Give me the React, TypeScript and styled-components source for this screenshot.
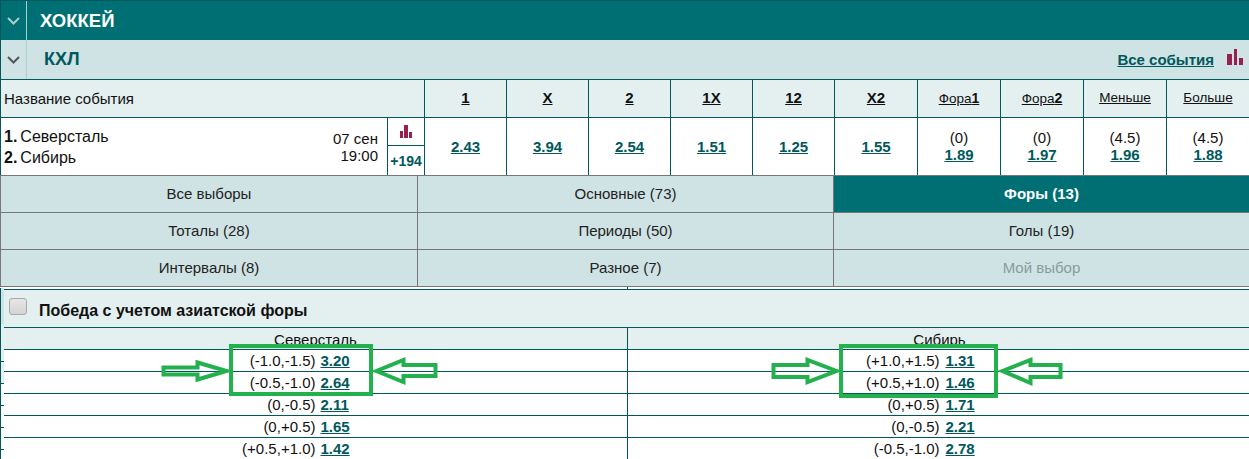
import React from 'react';
import styled, { createGlobalStyle } from 'styled-components';

const teal = '#006f74';
const line = '#00585c';
const pale = '#e4f0f0';
const tab = '#cfe3e4';
const grey = '#777';
const green = '#22b14c';

const GlobalStyle = createGlobalStyle`
  html, body {
    margin: 0;
    padding: 0;
    background: #fff;
    overflow: hidden;
  }
  body {
    font-family: "Liberation Sans", Arial, sans-serif;
    font-size: 15px;
    color: #111;
  }
`;

const Page = styled.div`
  position: relative;
  width: 1249px;
  height: 459px;
  overflow: hidden;
`;

const SportBar = styled.div`
  display: flex;
  height: 39px;
  border-top: 1px solid ${line};
  background: ${teal};
`;

const LeagueBar = styled.div`
  display: flex;
  align-items: center;
  height: 39px;
  background: ${tab};
  border-bottom: 1px solid ${line};
  border-left: 1px solid ${line};
`;

const Toggle = styled.div<{ $dark?: boolean }>`
  width: 25px;
  flex: none;
  align-self: stretch;
  display: flex;
  align-items: center;
  justify-content: center;
  border-left: ${p => (p.$dark ? `1px solid ${line}` : 'none')};
  border-right: 1px solid #a9cfd1;
`;

const SportTitle = styled.div`
  padding-left: 13px;
  line-height: 39px;
  font-size: 18.5px;
  font-weight: bold;
  color: #fff;
`;

const LeagueTitle = styled.div`
  padding-left: 17px;
  flex: 1;
  font-size: 18px;
  font-weight: bold;
  color: ${line};
`;

const AllEvents = styled.a`
  font-size: 15px;
  font-weight: bold;
  color: ${line};
  text-decoration: underline;
  margin-right: 13px;
`;

const Bars = styled.svg`
  display: block;
  margin: -5px 6px 0 0;
`;

const MarketGrid = styled.div`
  display: grid;
  grid-template-columns: 424px repeat(5, 82px) repeat(5, 83px);
`;

const HeadCell = styled.div<{ $first?: boolean }>`
  height: 37px;
  display: flex;
  align-items: center;
  justify-content: ${p => (p.$first ? 'flex-start' : 'center')};
  padding-left: ${p => (p.$first ? '3px' : '0')};
  background: ${pale};
  border-bottom: 1px solid ${line};
  border-left: 1px solid ${line};
`;

const HeadLink = styled.a<{ $strong?: boolean }>`
  margin-top: -2px;
  color: #111;
  text-decoration: underline;
  font-weight: ${p => (p.$strong ? 'bold' : 'normal')};
  font-size: ${p => (p.$strong ? '15px' : '13.5px')};
  b {
    font-size: 14px;
  }
`;

const EventCell = styled.div`
  display: flex;
  height: 57px;
  border-left: 1px solid ${line};
`;

const Teams = styled.div`
  flex: 1;
  padding: 8px 0 0 3px;
  line-height: 21px;
  font-size: 16px;
`;

const TeamNo = styled.b`
  margin-right: 3px;
`;

const When = styled.div`
  padding: 12px 9px 0 0;
  text-align: right;
  line-height: 17px;
  font-size: 15px;
`;

const Side = styled.div`
  width: 36px;
  flex: none;
  border-left: 1px solid ${line};
  display: grid;
  grid-template-rows: 28px 1fr;
`;

const SideIcon = styled.div`
  display: flex;
  align-items: center;
  justify-content: center;
  border-bottom: 1px solid ${line};
`;

const SideCount = styled.div`
  display: flex;
  align-items: center;
  justify-content: center;
  font-size: 14px;
  font-weight: bold;
  color: ${line};
`;

const OddsCell = styled.div<{ $stacked?: boolean }>`
  height: ${p => (p.$stacked ? 55 : 57)}px;
  padding-bottom: ${p => (p.$stacked ? 2 : 0)}px;
  border-left: 1px solid ${line};
  display: flex;
  flex-direction: column;
  align-items: center;
  justify-content: center;
  line-height: 17px;
`;

const Odd = styled.a`
  font-weight: bold;
  font-size: 15px;
  color: ${line};
  text-decoration: underline;
`;

const TabGrid = styled.div`
  display: grid;
  grid-template-columns: 417px 416px 416px;
  border-top: 1px solid ${grey};
`;

const Tab = styled.div<{ $active?: boolean; $muted?: boolean }>`
  height: 34px;
  padding-bottom: 2px;
  display: flex;
  align-items: center;
  justify-content: center;
  background: ${p => (p.$active ? teal : tab)};
  color: ${p => (p.$active ? '#fff' : p.$muted ? '#8a9a9a' : '#222')};
  font-weight: ${p => (p.$active ? 'bold' : 'normal')};
  border-bottom: 1px solid ${grey};
  border-left: 1px solid ${grey};
`;

const Section = styled.div`
  display: flex;
  margin-top: 1px;
  border-left: 1px solid ${line};
`;

const Strip = styled.div`
  width: 3px;
  flex: none;
  height: 96px;
  background: linear-gradient(${tab} 36px, ${pale} 36px);
`;

const SectionBody = styled.div`
  flex: 1;
  margin-top: 1px;
  border-top: 1px solid ${line};
`;

const SectionHead = styled.div`
  height: 37px;
  display: flex;
  align-items: center;
  gap: 12px;
  padding-left: 5px;
  background: ${pale};
  border-bottom: 1px solid ${line};
`;

const Check = styled.span`
  width: 16px;
  height: 15px;
  margin-top: -4px;
  border: 1px solid #a8a8a8;
  border-radius: 3px;
  background: linear-gradient(#e6e6e6, #d4d4d4);
`;

const SectionTitle = styled.div`
  padding-top: 4px;
  font-size: 16px;
  font-weight: bold;
`;

const OutcomeGrid = styled.div`
  display: grid;
  grid-template-columns: 623px 1fr;
`;

const OutcomeHead = styled.div<{ $right?: boolean }>`
  height: 21px;
  line-height: 23px;
  padding-left: ${p => (p.$right ? 2 : 0)}px;
  text-align: center;
  background: ${pale};
  border-bottom: 1px solid ${line};
  border-left: ${p => (p.$right ? `1px solid ${line}` : 'none')};
  overflow: hidden;
`;

const OutcomeCell = styled.div<{ $right?: boolean }>`
  height: 21px;
  display: grid;
  grid-template-columns: 1fr 1fr;
  align-items: center;
  padding-left: ${p => (p.$right ? 2 : 0)}px;
  border-bottom: 1px solid ${line};
  border-left: ${p => (p.$right ? `1px solid ${line}` : 'none')};
`;

const Handicap = styled.span`
  text-align: right;
`;

const OddSlot = styled.span<{ $right?: boolean }>`
  padding-left: ${p => (p.$right ? 6 : 5)}px;
`;

const Tick = styled.div<{ $left: number; $top: number; $wide?: boolean }>`
  position: absolute;
  left: ${p => p.$left}px;
  top: ${p => p.$top}px;
  width: ${p => (p.$wide ? 4 : 1)}px;
  height: ${p => (p.$wide ? 1 : 3)}px;
  background: ${line};
`;

const Notes = styled.svg`
  position: absolute;
  left: 0;
  top: 0;
  pointer-events: none;
`;

const Chevron = ({ color }: { color: string }) => (
  <svg width="13" height="8" viewBox="0 0 13 8">
    <path d="M1 1l5.5 5.5L12 1" fill="none" stroke={color} strokeWidth="2" />
  </svg>
);

const markets: { label: React.ReactNode; strong?: boolean }[] = [
  { label: '1', strong: true },
  { label: 'X', strong: true },
  { label: '2', strong: true },
  { label: '1X', strong: true },
  { label: '12', strong: true },
  { label: 'X2', strong: true },
  { label: <>Фора<b>1</b></> },
  { label: <>Фора<b>2</b></> },
  { label: 'Меньше' },
  { label: 'Больше' },
];

const prices: { param?: string; odd: string }[] = [
  { odd: '2.43' },
  { odd: '3.94' },
  { odd: '2.54' },
  { odd: '1.51' },
  { odd: '1.25' },
  { odd: '1.55' },
  { param: '(0)', odd: '1.89' },
  { param: '(0)', odd: '1.97' },
  { param: '(4.5)', odd: '1.96' },
  { param: '(4.5)', odd: '1.88' },
];

const tabs = [
  { label: 'Все выборы' },
  { label: 'Основные (73)' },
  { label: 'Форы (13)', active: true },
  { label: 'Тоталы (28)' },
  { label: 'Периоды (50)' },
  { label: 'Голы (19)' },
  { label: 'Интервалы (8)' },
  { label: 'Разное (7)' },
  { label: 'Мой выбор', muted: true },
];

const outcomes = [
  ['(-1.0,-1.5)', '3.20', '(+1.0,+1.5)', '1.31'],
  ['(-0.5,-1.0)', '2.64', '(+0.5,+1.0)', '1.46'],
  ['(0,-0.5)', '2.11', '(0,+0.5)', '1.71'],
  ['(0,+0.5)', '1.65', '(0,-0.5)', '2.21'],
  ['(+0.5,+1.0)', '1.42', '(-0.5,-1.0)', '2.78'],
];

const App = () => (
  <Page>
    <GlobalStyle />
    <SportBar>
      <Toggle $dark>
        <Chevron color="#a9cfd1" />
      </Toggle>
      <SportTitle>ХОККЕЙ</SportTitle>
    </SportBar>
    <LeagueBar>
      <Toggle>
        <Chevron color="#555" />
      </Toggle>
      <LeagueTitle>КХЛ</LeagueTitle>
      <AllEvents>Все события</AllEvents>
      <Bars width="16" height="16" viewBox="0 0 16 16">
        <path d="M0 5h5v11H0zM7 0h3v16H7zM12 9h4v7h-4z" fill="#96204f" />
      </Bars>
    </LeagueBar>
    <MarketGrid>
      <HeadCell $first>Название события</HeadCell>
      {markets.map((m, i) => (
        <HeadCell key={i}>
          <HeadLink $strong={m.strong}>{m.label}</HeadLink>
        </HeadCell>
      ))}
      <EventCell>
        <Teams>
          <div><TeamNo>1.</TeamNo>Северсталь</div>
          <div><TeamNo>2.</TeamNo>Сибирь</div>
        </Teams>
        <When>
          <div>07 сен</div>
          <div>19:00</div>
        </When>
        <Side>
          <SideIcon>
            <svg width="14" height="13" viewBox="0 0 14 13">
              <path d="M1 6h3v7H1zM5 0h4v13H5zM10 7h3v6h-3z" fill="#96204f" />
            </svg>
          </SideIcon>
          <SideCount>+194</SideCount>
        </Side>
      </EventCell>
      {prices.map((p, i) => (
        <OddsCell key={i} $stacked={!!p.param}>
          {p.param && <span>{p.param}</span>}
          <Odd>{p.odd}</Odd>
        </OddsCell>
      ))}
    </MarketGrid>
    <TabGrid>
      {tabs.map(t => (
        <Tab key={t.label} $active={t.active} $muted={t.muted}>
          {t.label}
        </Tab>
      ))}
    </TabGrid>
    <Section>
      <Strip />
      <SectionBody>
        <SectionHead>
          <Check />
          <SectionTitle>Победа с учетом азиатской форы</SectionTitle>
        </SectionHead>
        <OutcomeGrid>
          <OutcomeHead>Северсталь</OutcomeHead>
          <OutcomeHead $right>Сибирь</OutcomeHead>
          {outcomes.map(row => (
            <React.Fragment key={row[0]}>
              <OutcomeCell>
                <Handicap>{row[0]}</Handicap>
                <OddSlot><Odd>{row[1]}</Odd></OddSlot>
              </OutcomeCell>
              <OutcomeCell $right>
                <Handicap>{row[2]}</Handicap>
                <OddSlot $right><Odd>{row[3]}</Odd></OddSlot>
              </OutcomeCell>
            </React.Fragment>
          ))}
        </OutcomeGrid>
      </SectionBody>
    </Section>
    <Tick $left={627} $top={287} />
    {[361, 383, 405, 427, 449].map(t => (
      <Tick key={t} $left={0} $top={t} $wide />
    ))}
    <Notes width="1249" height="459" viewBox="0 0 1249 459" fill="none" stroke={green} strokeWidth="4">
      <rect x="231" y="346" width="140" height="48" />
      <rect x="841" y="346" width="155" height="50" />
      <path d="M163.5 367.5h34v-5l29 8.5-29 8.5v-5h-34z" />
      <path d="M435.5 365h-32v-5l-27 11 27 11v-6h32z" />
      <path d="M773.5 365h34v-5l29 11-29 11v-5h-34z" />
      <path d="M1060.5 365h-30v-5l-28 11 28 12v-6h30z" />
    </Notes>
  </Page>
);

export default App;
